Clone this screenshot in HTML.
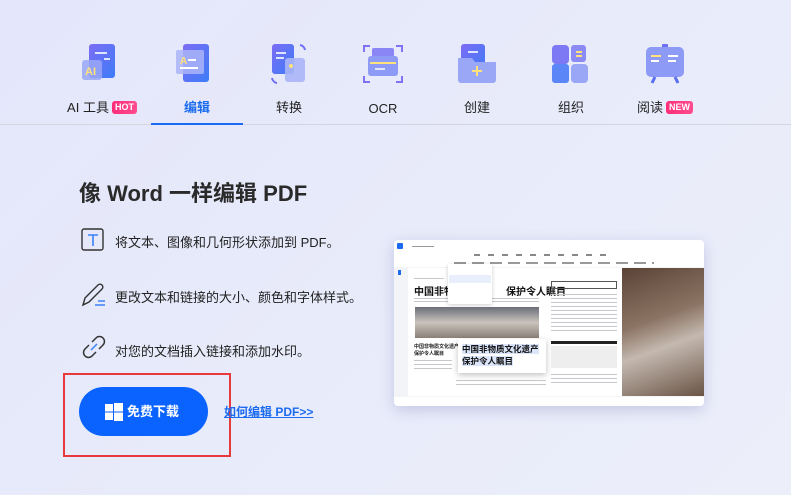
<!DOCTYPE html>
<html><head><meta charset="utf-8"><style>
*{margin:0;padding:0;box-sizing:border-box}
body{width:791px;height:495px;overflow:hidden;background:linear-gradient(135deg,#e4e6fb 0%,#e8ebfa 50%,#eceefa 100%);font-family:"Liberation Sans","Noto Sans CJK SC",sans-serif;position:relative;color:#222}
.a{position:absolute}
.ic{position:absolute;top:42px;width:44px;height:44px}
.lb{position:absolute;top:99px;font-size:13px;color:#222;text-align:center;width:94px;height:18px;line-height:18px}
.badge{display:inline-block;font-size:9px;font-weight:bold;color:#fff;background:linear-gradient(90deg,#ff2d7a,#ff4d8f);border-radius:3px;padding:1px 3px;margin-left:3px;vertical-align:2px;line-height:11px}
.item{position:absolute;left:115px;font-size:13px;color:#222}
.ln{background:#d4d6df;height:1px}
.t{position:absolute;height:1px;background:#c8c8cc}
</style></head><body>
<svg class="ic" style="left:80px" viewBox="0 0 44 44"><defs><linearGradient id="b" x1="0" y1="0" x2="1" y2="1"><stop offset="0" stop-color="#7c6cf5"/><stop offset="1" stop-color="#3d7cf7"/></linearGradient></defs><rect x="9" y="2" width="26" height="34" rx="3" fill="url(#b)"/><rect x="15" y="10" width="12" height="2" fill="#dfe4ff"/><rect x="24" y="16" width="6" height="2" fill="#dfe4ff"/><rect x="2" y="18" width="20" height="20" rx="3" fill="#9aa7f6" opacity=".85"/><text x="5" y="33" font-size="11" font-weight="bold" fill="#ffe27a" font-family="Liberation Sans">AI</text></svg>
<svg class="ic" style="left:173px" viewBox="0 0 44 44"><rect x="10" y="2" width="26" height="38" rx="3" fill="url(#b)"/><rect x="3" y="8" width="28" height="24" rx="2" fill="#aab5f8" opacity=".85"/><text x="7" y="22" font-size="10" font-weight="bold" fill="#ffe27a" font-family="Liberation Sans">A</text><rect x="15" y="17" width="8" height="2" fill="#fff"/><rect x="7" y="25" width="18" height="2" fill="#fff"/></svg>
<svg class="ic" style="left:267px" viewBox="0 0 44 44"><rect x="5" y="2" width="22" height="30" rx="3" fill="url(#b)"/><rect x="9" y="10" width="10" height="2" fill="#dfe4ff"/><rect x="9" y="15" width="8" height="2" fill="#dfe4ff"/><rect x="18" y="16" width="20" height="24" rx="3" fill="#aab5f8" opacity=".9"/><circle cx="24" cy="24" r="2" fill="#ffe27a"/><path d="M33 3a6 6 0 0 1 5 5M5 36a6 6 0 0 0 5 5" stroke="#6b6ff2" stroke-width="2" fill="none"/></svg>
<svg class="ic" style="left:361px" viewBox="0 0 44 44"><path d="M3 10V4h6M35 4h6v6M3 34v6h6M35 40h6v-6" stroke="#7d73f3" stroke-width="2" fill="none"/><rect x="11" y="6" width="22" height="10" rx="2" fill="#8a86f6"/><rect x="7" y="14" width="30" height="20" rx="3" fill="#8d9bf6"/><rect x="9" y="20" width="26" height="2" fill="#ffe27a"/><rect x="14" y="26" width="10" height="2" fill="#dfe4ff"/></svg>
<svg class="ic" style="left:455px" viewBox="0 0 44 44"><rect x="6" y="2" width="24" height="30" rx="3" fill="url(#b)"/><rect x="13" y="9" width="10" height="2" fill="#dfe4ff"/><path d="M3 16h14l3 4h21v18a3 3 0 0 1-3 3H6a3 3 0 0 1-3-3z" fill="#9aa7f6"/><path d="M22 24v10M17 29h10" stroke="#ffe27a" stroke-width="2"/></svg>
<svg class="ic" style="left:549px" viewBox="0 0 44 44"><rect x="3" y="3" width="17" height="19" rx="4" fill="#7d78f4"/><rect x="22" y="3" width="15" height="17" rx="3" fill="#8c8af5"/><rect x="27" y="9" width="6" height="2" fill="#ffe27a"/><rect x="27" y="13" width="6" height="2" fill="#ffe27a"/><rect x="3" y="22" width="17" height="19" rx="3" fill="#5b86f7"/><rect x="22" y="22" width="17" height="19" rx="4" fill="#9aa7f6"/></svg>
<svg class="ic" style="left:643px" viewBox="0 0 44 44"><rect x="19" y="2" width="6" height="4" rx="1" fill="#6c6ff2"/><rect x="3" y="5" width="38" height="30" rx="5" fill="#8d9bf6"/><rect x="8" y="13" width="10" height="2" fill="#ffe27a"/><rect x="8" y="18" width="8" height="2" fill="#fff"/><rect x="25" y="13" width="10" height="2" fill="#fff"/><rect x="25" y="18" width="8" height="2" fill="#fff"/><path d="M12 35l-3 6M32 35l3 6" stroke="#5a6ef2" stroke-width="3"/></svg>
<div class="lb" style="left:55px">AI 工具<span class="badge">HOT</span></div>
<div class="lb" style="left:150px;color:#1a6bf0;font-weight:bold">编辑</div>
<div class="lb" style="left:242px">转换</div>
<div class="lb" style="left:336px;top:100px">OCR</div>
<div class="lb" style="left:430px">创建</div>
<div class="lb" style="left:524px">组织</div>
<div class="lb" style="left:618px">阅读<span class="badge">NEW</span></div>
<div class="a ln" style="left:0;top:124px;width:791px"></div>
<div class="a" style="left:151px;top:123px;width:92px;height:2px;background:#1a6bf0"></div>
<div class="a" style="left:79px;top:176px;font-size:22px;font-weight:bold;color:#2a2a2a">像 Word 一样编辑 PDF</div>
<svg class="a" style="left:81px;top:228px" width="24" height="24" viewBox="0 0 24 24"><rect x="1" y="1" width="21" height="21" rx="2" fill="none" stroke="#333" stroke-width="1.4"/><path d="M7 7h10M12 7v11" stroke="#3b82f6" stroke-width="1.6"/></svg>
<div class="item" style="top:232px">将文本、图像和几何形状添加到 PDF。</div>
<svg class="a" style="left:81px;top:281px" width="26" height="26" viewBox="0 0 26 26"><path d="M2 24l2-7L17 4a2.5 2.5 0 0 1 4 4L8 21z" fill="none" stroke="#333" stroke-width="1.4"/><path d="M14 24h10M17 20h7" stroke="#3b82f6" stroke-width="1.4"/></svg>
<div class="item" style="top:287px">更改文本和链接的大小、颜色和字体样式。</div>
<svg class="a" style="left:81px;top:334px" width="26" height="26" viewBox="0 0 26 26"><path d="M11 8l4-4a4.5 4.5 0 0 1 7 7l-4 4M15 18l-4 4a4.5 4.5 0 0 1-7-7l4-4" fill="none" stroke="#333" stroke-width="1.5"/><path d="M10 16l6-6" stroke="#3b82f6" stroke-width="1.5"/></svg>
<div class="item" style="top:341px">对您的文档插入链接和添加水印。</div>
<div class="a" style="left:63px;top:373px;width:168px;height:84px;border:2px solid #e8393d"></div>
<div class="a" style="left:79px;top:387px;width:129px;height:49px;border-radius:25px;background:#0a63ff;color:#fff;font-size:13px;font-weight:bold;line-height:49px;padding-left:48px">免费下载</div>
<svg class="a" style="left:105px;top:403px" width="18" height="18" viewBox="0 0 18 18" fill="#fff"><rect x="0" y="1" width="8" height="7.5"/><rect x="9" y="0" width="9" height="8.5"/><rect x="0" y="9.5" width="8" height="7.5"/><rect x="9" y="9.5" width="9" height="8.5"/></svg>
<div class="a" style="left:224px;top:403px;font-size:12px;font-weight:bold;color:#1a6bf0;text-decoration:underline">如何编辑 PDF&gt;&gt;</div>
<!-- screenshot -->
<div class="a" style="left:394px;top:240px;width:310px;height:166px;background:#fff;border-radius:4px;box-shadow:0 4px 14px rgba(80,90,160,.25);overflow:hidden">
 <div class="a" style="left:3px;top:3px;width:6px;height:6px;background:#1a6bf0;border-radius:1px"></div>
 <div class="t" style="left:18px;top:6px;width:22px;background:#999"></div>
 <div class="t" style="left:80px;top:14px;width:140px;height:2px;background:repeating-linear-gradient(90deg,#888 0 6px,transparent 6px 14px)"></div>
 <div class="t" style="left:60px;top:22px;width:200px;height:2px;background:repeating-linear-gradient(90deg,#999 0 12px,transparent 12px 18px)"></div>
 <div class="a" style="left:0;top:27px;width:310px;height:130px;background:#f3f4f7"></div>
 <div class="a" style="left:4px;top:30px;width:3px;height:5px;background:#1a6bf0"></div>
 <div class="a" style="left:14px;top:28px;width:214px;height:128px;background:#fff"></div>
 <div class="a" style="left:228px;top:28px;width:82px;height:128px;background:linear-gradient(160deg,#5a4236,#8c7464 40%,#c4b9b0 60%,#6a5446)"></div>
 <div class="t" style="left:20px;top:38px;width:30px"></div>
 <div class="a" style="left:20px;top:43px;font-size:10px;font-weight:bold;color:#111;white-space:nowrap">中国非物<span style="margin-left:52px">保护令人瞩目</span></div>
 <div class="t" style="left:20px;top:58px;width:125px"></div>
 <div class="t" style="left:20px;top:61px;width:125px"></div>
 <div class="a" style="left:54px;top:24px;width:44px;height:40px;background:#fff;box-shadow:0 1px 4px rgba(0,0,0,.2);border-radius:2px"></div>
 <div class="a" style="left:55px;top:35px;width:42px;height:8px;background:#e8eefc"></div>
 <div class="a" style="left:21px;top:67px;width:124px;height:31px;background:linear-gradient(180deg,#6b6e78,#c9c3bc 50%,#8a8078)"></div>
 <div class="a" style="left:20px;top:104px;font-size:5px;font-weight:bold;line-height:7px;color:#222">中国非物质文化遗产<br>保护令人瞩目</div>
 <div class="t" style="left:20px;top:120px;width:38px"></div><div class="t" style="left:20px;top:124px;width:38px"></div><div class="t" style="left:20px;top:128px;width:38px"></div>
 <div class="t" style="left:62px;top:140px;width:90px"></div><div class="t" style="left:62px;top:144px;width:90px"></div>
 <div class="a" style="left:64px;top:99px;width:88px;height:34px;background:#fff;box-shadow:0 2px 6px rgba(0,0,0,.25);padding:4px 4px;font-size:8.5px;font-weight:bold;line-height:12px;color:#111;white-space:nowrap"><span style="background:#dbe6fb">中国非物质文化遗产<br>保护令人瞩目</span></div>
 <div class="a" style="left:157px;top:41px;width:66px;height:8px;border:1px solid #555"></div>
 <div class="t" style="left:157px;top:54px;width:66px"></div><div class="t" style="left:157px;top:58px;width:66px"></div><div class="t" style="left:157px;top:62px;width:66px"></div><div class="t" style="left:157px;top:66px;width:66px"></div><div class="t" style="left:157px;top:70px;width:66px"></div><div class="t" style="left:157px;top:74px;width:66px"></div><div class="t" style="left:157px;top:78px;width:66px"></div><div class="t" style="left:157px;top:82px;width:66px"></div><div class="t" style="left:157px;top:86px;width:66px"></div><div class="t" style="left:157px;top:90px;width:66px"></div>
 <div class="a" style="left:157px;top:101px;width:66px;height:3px;background:#222"></div>
 <div class="a" style="left:157px;top:106px;width:66px;height:22px;background:#eee"></div>
 <div class="t" style="left:157px;top:134px;width:66px"></div><div class="t" style="left:157px;top:138px;width:66px"></div><div class="t" style="left:157px;top:142px;width:66px"></div>
 <div class="a" style="left:0;top:157px;width:310px;height:9px;background:#fff"></div>
</div>
</body></html>
